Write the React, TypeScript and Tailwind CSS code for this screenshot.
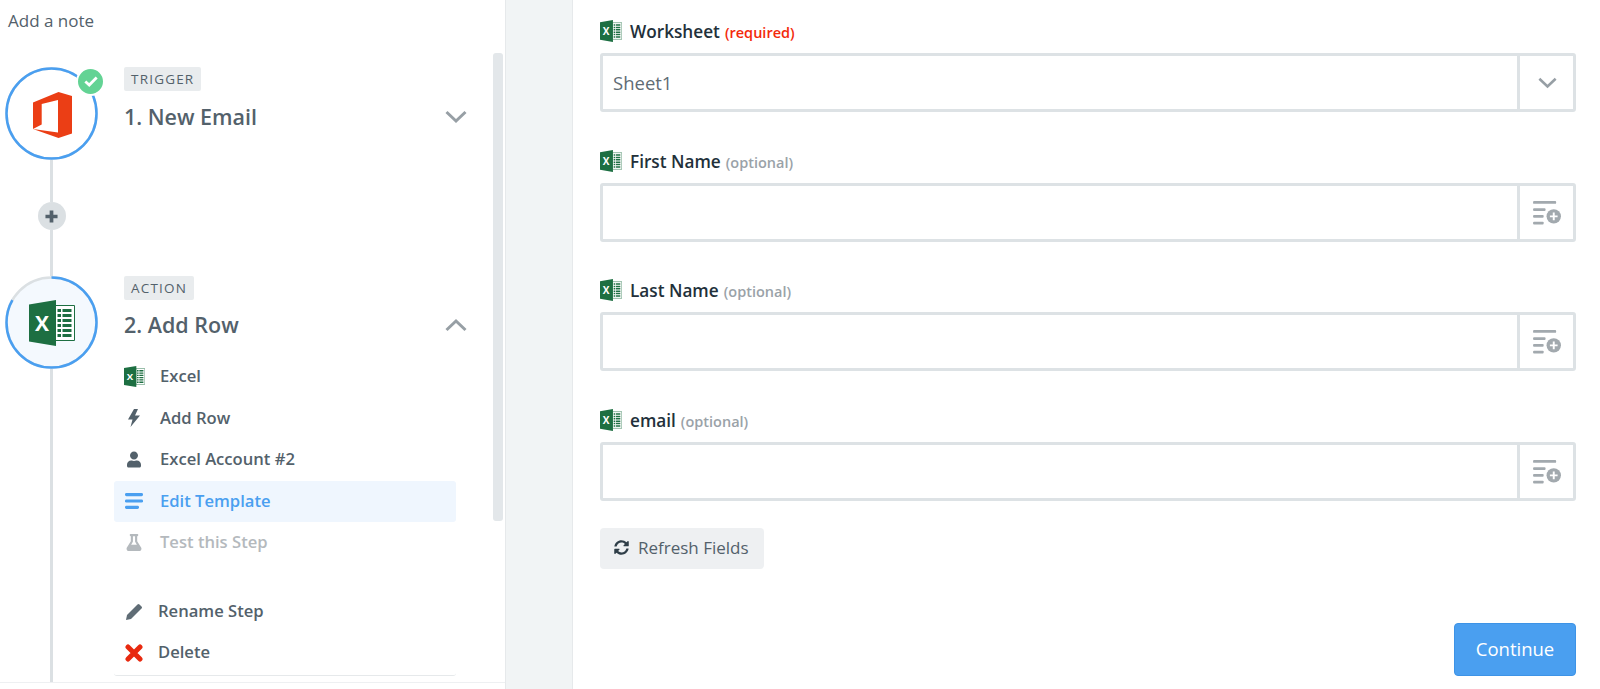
import { FaFlask, FaSyncAlt, FaUser } from "react-icons/fa";
import type { ReactNode } from "react";

function ExcelLogo({ className }: { className: string }) {
  return (
    <svg viewBox="0 0 46 46" className={className}>
      <path d="M26 5.500h19.500v35H26z" fill="#fff" stroke="#1d6f42" strokeWidth="1" />
      <path
        d="M28.500 9h3.500v3h-3.500zM33.500 9h9v3h-9zM28.500 14h3.500v3h-3.500zM33.500 14h9v3h-9zM28.500 19h3.500v3h-3.500zM33.500 19h9v3h-9zM28.500 24h3.500v3h-3.500zM33.500 24h9v3h-9zM28.500 29h3.500v3h-3.500zM33.500 29h9v3h-9zM28.500 34h3.500v3h-3.500zM33.500 34h9v3h-9z"
        fill="#1d6f42"
      />
      <path d="M0 4.500 27 0v46L0 41.500z" fill="#1d6f42" />
      <text x="13" y="31" textAnchor="middle" fill="#fff" fontSize="21" fontWeight="700" fontFamily="Open Sans, sans-serif">
        X
      </text>
    </svg>
  );
}

function OfficeLogo() {
  return (
    <svg viewBox="0 0 39 46" className="w-[39px] h-[46px]">
      <path
        fillRule="evenodd"
        d="M0 10.500 25.500 0 39 4v37.500L25.500 46 0 37zM8.700 12 25 8v32.500L0 37l8.700-4.500z"
        fill="#eb3e15"
      />
    </svg>
  );
}

function Ring({ active }: { active?: boolean }) {
  // r=45, circumference 282.7
  return (
    <svg viewBox="0 0 93 93" className="absolute inset-0 w-[93px] h-[93px] -rotate-90">
      <circle cx="46.5" cy="46.5" r="45" fill={active ? "#f4f9fe" : "#fff"} stroke="#dbe0e3" strokeWidth="2.5" />
      <circle
        cx="46.5"
        cy="46.5"
        r="45"
        fill="none"
        stroke="#4a9ff0"
        strokeWidth="2.5"
        strokeDasharray={active ? "235 283" : "283 283"}
      />
    </svg>
  );
}

function Chevron({ up, className }: { up?: boolean; className: string }) {
  return (
    <svg viewBox="0 0 22 14" className={className} fill="none" stroke="#979fa5" strokeWidth="3">
      <path d={up ? "M1.500 12 11 3l9.500 9" : "M1.500 2 11 11l9.500-9"} />
    </svg>
  );
}

function MenuRow({
  icon,
  label,
  textClass = "text-[#53616b]",
  className = "",
  gap = "mr-[16px]",
}: {
  icon: ReactNode;
  label: string;
  textClass?: string;
  className?: string;
  gap?: string;
}) {
  return (
    <div className={`flex items-center h-[41.5px] ${className}`}>
      <div className={`w-[20px] ml-[10px] ${gap} flex items-center justify-center shrink-0`}>{icon}</div>
      <span className={`text-[16.6px] font-semibold ${textClass}`}>{label}</span>
    </div>
  );
}

function AddFieldIcon() {
  return (
    <svg viewBox="0 0 30 26" className="w-[29px] h-[25px]" fill="#a2a9ae">
      <rect x="0" y="1" width="24" height="3" rx="1" />
      <rect x="0" y="8.5" width="13" height="3" rx="1" />
      <rect x="0" y="15.5" width="11" height="3" rx="1" />
      <rect x="0" y="22.5" width="11" height="3" rx="1" />
      <circle cx="21.5" cy="17" r="7.500" />
      <path d="M20.500 13h2v3h3v2h-3v3h-2v-3h-3v-2h3z" fill="#fff" />
    </svg>
  );
}

const fields = [
  { name: "Worksheet", hint: "(required)", hintClass: "text-[#f3290b]", value: "Sheet1", select: true },
  { name: "First Name", hint: "(optional)", hintClass: "text-[#9aa2a8]", value: "" },
  { name: "Last Name", hint: "(optional)", hintClass: "text-[#9aa2a8]", value: "" },
  { name: "email", hint: "(optional)", hintClass: "text-[#9aa2a8]", value: "" },
];

export default function App() {
  return (
    <div className="flex h-[689px] w-[1600px] overflow-hidden bg-white font-['Open_Sans',sans-serif]">
      {/* left sidebar */}
      <div className="w-[506px] h-full shrink-0 flex flex-col border-r border-[#e6e9eb]">
        <div className="flex-1 min-h-0 flex flex-col">
          <div className="h-[53px] pl-2 pt-[10px] text-[17px] leading-[22px] font-medium text-[#53616b]">Add a note</div>
          <div className="flex-1 min-h-0 flex">
            {/* timeline */}
            <div className="w-[93px] ml-[5px] pt-[14px] flex flex-col items-center shrink-0">
              <div className="relative w-[93px] h-[93px] shrink-0 flex items-center justify-center">
                <Ring />
                <div className="relative ml-[2px] mt-[3px]">
                  <OfficeLogo />
                </div>
                <div className="absolute right-[-7px] top-0 w-[29px] h-[29px] rounded-full bg-[#63d394] border-[2.5px] border-white flex items-center justify-center">
                  <svg viewBox="0 0 16 12" className="w-[14px] h-[11px]" fill="none" stroke="#fff" strokeWidth="3.2">
                    <path d="M1.500 6 6 10l8.500-8.500" />
                  </svg>
                </div>
              </div>
              <div className="w-[3px] h-[42px] bg-[#dbe0e3] shrink-0" />
              <div className="w-[28px] h-[28px] rounded-full bg-[#dbe0e3] flex items-center justify-center shrink-0">
                <svg viewBox="0 0 14 14" className="w-[13px] h-[13px]" fill="#53616b">
                  <path d="M5 .5h4V5h4.500v4H9v4.500H5V9H.5V5H5z" />
                </svg>
              </div>
              <div className="w-[3px] h-[46px] bg-[#dbe0e3] shrink-0" />
              <div className="relative w-[93px] h-[93px] shrink-0 flex items-center justify-center">
                <Ring active />
                <div className="relative">
                  <ExcelLogo className="w-[46px] h-[46px]" />
                </div>
              </div>
              <div className="w-[3px] flex-1 bg-[#dbe0e3]" />
            </div>

            {/* steps */}
            <div className="w-[343px] ml-[26px] pt-[13px] shrink-0">
              <div className="h-[209px]">
                <span className="inline-block h-6 px-[7px] rounded-[2px] bg-[#e9ecee] text-[13.5px] leading-6 font-medium tracking-[1.2px] text-[#53616b]">
                  TRIGGER
                </span>
                <div className="flex items-center justify-between mt-[11px]">
                  <span className="text-[21.5px] leading-[30px] font-semibold text-[#53616b]">1. New Email</span>
                  <Chevron className="w-[22px] h-[14px]" />
                </div>
              </div>
              <span className="inline-block h-6 px-[7px] rounded-[2px] bg-[#e9ecee] text-[13.5px] leading-6 font-medium tracking-[1.2px] text-[#53616b]">
                ACTION
              </span>
              <div className="flex items-center justify-between mt-[10px]">
                <span className="text-[21.5px] leading-[30px] font-semibold text-[#53616b]">2. Add Row</span>
                <Chevron up className="w-[22px] h-[14px]" />
              </div>
              <div className="ml-[-10px] w-[342px] mt-[16px]">
                <MenuRow icon={<ExcelLogo className="w-[21px] h-[21px] shrink-0" />} label="Excel" />
                <MenuRow
                  icon={
                    <svg viewBox="0 0 12 18" className="w-[12px] h-[18px]" fill="#53616b">
                      <path d="M6 0 0 10.500h4.500L2.500 18 12 6.500H7L10 0z" />
                    </svg>
                  }
                  label="Add Row"
                />
                <MenuRow icon={<FaUser className="w-[14px] h-[17px] text-[#53616b]" />} label="Excel Account #2" />
                <MenuRow
                  className="rounded-[3px] bg-[#eff6fe]"
                  textClass="text-[#4a9ff0]"
                  icon={
                    <svg viewBox="0 0 18 16" className="w-[18px] h-[16px]" fill="#4a9ff0">
                      <rect x="0" y="0" width="18" height="3.200" rx="1.400" />
                      <rect x="0" y="6.400" width="18" height="3.200" rx="1.400" />
                      <rect x="0" y="12.800" width="14" height="3.200" rx="1.400" />
                    </svg>
                  }
                  label="Edit Template"
                />
                <MenuRow icon={<FaFlask className="w-[16px] h-[17px] text-[#b4b9bd]" />} label="Test this Step" textClass="text-[#b4b9bd]" />
                <div className="mt-[27px] pb-px border-b border-[#e6e9eb] rounded-b-[3px]">
                  <MenuRow
                    gap="mr-[14px]"
                    icon={
                      <svg viewBox="0 0 16 17" className="w-[16px] h-[17px]" fill="#5f6c75">
                        <path d="M0 17l1-5L11.500 1.500q1-1 2 0l2 2q1 1 0 2L5 16z" />
                      </svg>
                    }
                    label="Rename Step"
                  />
                  <MenuRow
                    gap="mr-[14px]"
                    icon={
                      <svg viewBox="0 0 18 18" className="w-[18px] h-[18px]" fill="none" stroke="#e8290f" strokeWidth="5" strokeLinecap="round">
                        <path d="M3 3l12 12M15 3 3 15" />
                      </svg>
                    }
                    label="Delete"
                  />
                </div>
              </div>
            </div>

            {/* scrollbar */}
            <div className="w-[10px] h-[468px] ml-[26px] rounded-[3px] bg-[#e3e7ea] shrink-0" />
          </div>
        </div>
        <div className="h-[7px] shrink-0 border-t border-[#eef0f2]" />
      </div>

      {/* gutter */}
      <div className="w-[67px] shrink-0 bg-[#f1f4f5] border-r border-[#e6e9eb]" />

      {/* form */}
      <div className="flex-1 min-w-0 flex flex-col pl-[27px] pr-6 pt-5 pb-[13px]">
        <div className="flex flex-col gap-[37.6px]">
          {fields.map((f) => (
            <div key={f.name}>
              <div className="h-[33px] flex items-start">
                <ExcelLogo className="w-[22px] h-[22px] shrink-0" />
                <span className="ml-2 text-[17.2px] leading-[24px] font-semibold text-[#22303a]">{f.name}</span>
                <span className={`ml-[5px] text-[14.5px] leading-[25px] font-semibold ${f.hintClass}`}>{f.hint}</span>
              </div>
              <div className="flex h-[59px] rounded-[3px] border-[3px] border-[#dde2e5]">
                <div className="flex-1 flex items-center pl-[10px] pt-px text-[18.5px] text-[#5f6c75]">{f.value}</div>
                <div className="w-[56px] pl-[2px] shrink-0 border-l-[3px] border-[#dde2e5] flex items-center justify-center">
                  {f.select ? <Chevron className="w-[19px] h-[12px]" /> : <AddFieldIcon />}
                </div>
              </div>
            </div>
          ))}
        </div>
        <button className="mt-[27px] self-start flex items-center h-[41px] w-[164px] rounded-[4px] bg-[#eef0f2] pl-[14px] pb-px text-[17px] text-[#53616b]">
          <FaSyncAlt className="w-[15px] h-[15px] mr-[9px] text-[#2f3e48]" />
          Refresh Fields
        </button>
        <button className="mt-auto self-end h-[53px] w-[122px] rounded-[4px] border border-[#3d93e6] bg-[#4a9ff0] pb-[2px] text-[18.5px] font-medium text-white">
          Continue
        </button>
      </div>
    </div>
  );
}
